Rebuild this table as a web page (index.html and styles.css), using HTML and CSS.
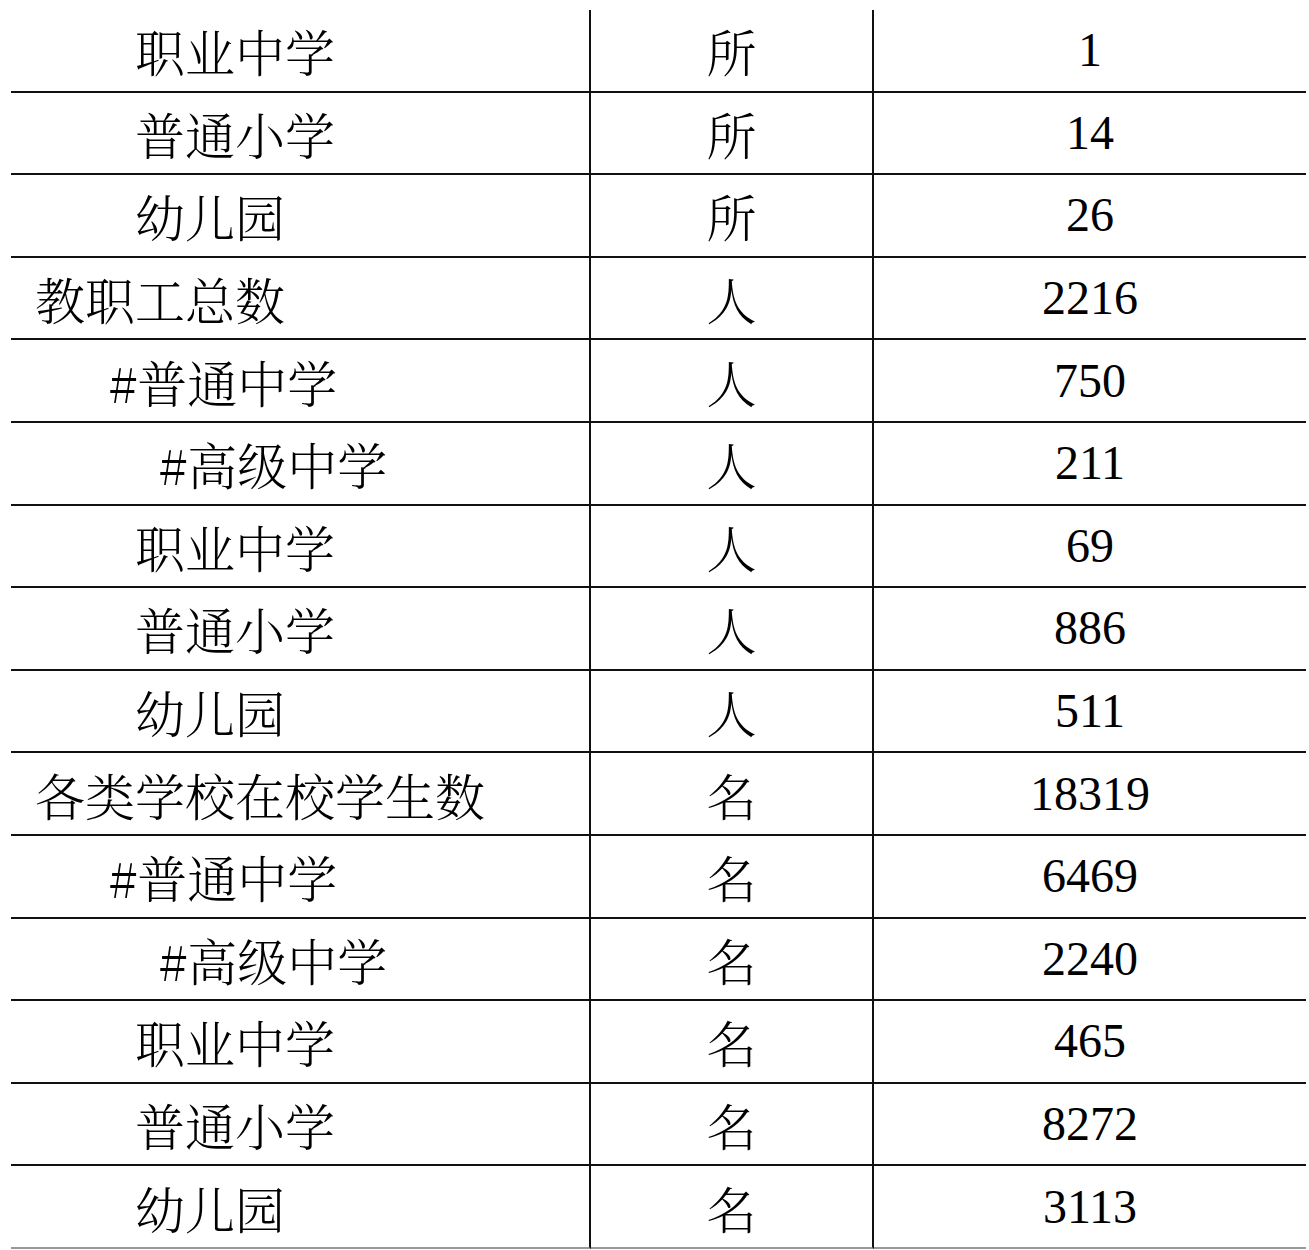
FILE: index.html
```html
<!DOCTYPE html>
<html lang="zh-CN">
<head>
<meta charset="utf-8">
<title>教育统计</title>
<link rel="stylesheet" href="styles.css">
</head>
<body>
<div class="table">
  <div class="cell name l1">职业中学</div><div class="cell unit">所</div><div class="cell num">1</div>
  <div class="cell name l1">普通小学</div><div class="cell unit">所</div><div class="cell num">14</div>
  <div class="cell name l1">幼儿园</div><div class="cell unit">所</div><div class="cell num">26</div>
  <div class="cell name l0">教职工总数</div><div class="cell unit">人</div><div class="cell num">2216</div>
  <div class="cell name h1">#普通中学</div><div class="cell unit">人</div><div class="cell num">750</div>
  <div class="cell name h2">#高级中学</div><div class="cell unit">人</div><div class="cell num">211</div>
  <div class="cell name l1">职业中学</div><div class="cell unit">人</div><div class="cell num">69</div>
  <div class="cell name l1">普通小学</div><div class="cell unit">人</div><div class="cell num">886</div>
  <div class="cell name l1">幼儿园</div><div class="cell unit">人</div><div class="cell num">511</div>
  <div class="cell name l0">各类学校在校学生数</div><div class="cell unit">名</div><div class="cell num">18319</div>
  <div class="cell name h1">#普通中学</div><div class="cell unit">名</div><div class="cell num">6469</div>
  <div class="cell name h2">#高级中学</div><div class="cell unit">名</div><div class="cell num">2240</div>
  <div class="cell name l1">职业中学</div><div class="cell unit">名</div><div class="cell num">465</div>
  <div class="cell name l1">普通小学</div><div class="cell unit">名</div><div class="cell num">8272</div>
  <div class="cell name l1 last">幼儿园</div><div class="cell unit last">名</div><div class="cell num last">3113</div>
</div>
</body>
</html>
```

FILE: styles.css
```css
html, body {
  margin: 0;
  padding: 0;
  background: #fff;
  color: #000;
}

.table {
  display: grid;
  grid-template-columns: 580px 283px 432px;
  grid-auto-rows: 82.6px;
  margin: 10px 0 0 11px;
  width: 1295px;
  font-family: "Noto Serif CJK SC", "AR PL UMing CN", "Noto Sans CJK SC", serif;
  font-size: 50px;
  font-weight: 300;
}

.cell {
  box-sizing: border-box;
  border-bottom: 2px solid #111;
  display: flex;
  align-items: center;
  line-height: 1;
  white-space: nowrap;
}

.name,
.unit {
  border-right: 2px solid #111;
}

.unit {
  justify-content: center;
}

.num {
  justify-content: center;
  font-family: "Liberation Serif", "Times New Roman", serif;
  font-size: 48px;
  font-weight: 400;
}

.l0 { padding-left: 24px; }
.l1 { padding-left: 124px; }
.h1 { padding-left: 98px; }
.h2 { padding-left: 148px; }

.last {
  border-bottom-color: #999;
}
```
